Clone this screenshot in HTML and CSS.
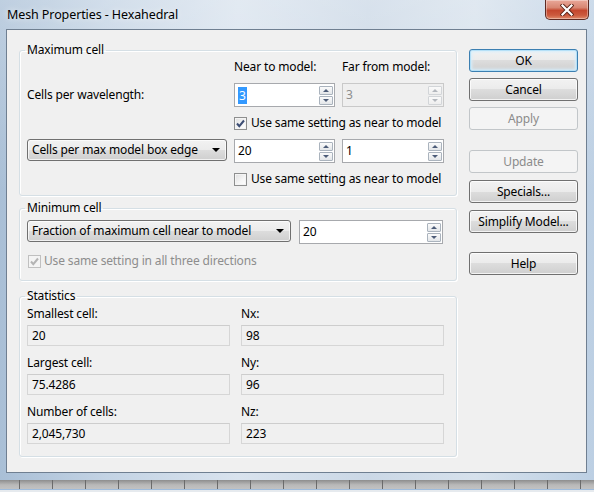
FILE: index.html
```html
<!DOCTYPE html>
<html>
<head>
<meta charset="utf-8">
<link rel="stylesheet" href="styles.css">
</head>
<body>
<div class="window">
  <div class="titlebar">
    <span class="title">Mesh Properties - Hexahedral</span>
    <div class="close">
      <svg width="14" height="12" viewBox="0 0 14 12">
        <path d="M2.5 1.5 L11.5 10.5 M11.5 1.5 L2.5 10.5" stroke="#5a2418" stroke-width="4" stroke-linecap="square"/>
        <path d="M2.5 1.5 L11.5 10.5 M11.5 1.5 L2.5 10.5" stroke="#ffffff" stroke-width="2.2" stroke-linecap="square"/>
      </svg>
    </div>
  </div>
  <div class="client">
    <div class="main">
      <fieldset class="group g-max">
        <legend>Maximum cell</legend>
        <div class="max-grid">
          <span></span>
          <span class="lbl">Near to model:</span>
          <span class="lbl">Far from model:</span>

          <span class="lbl">Cells per wavelength:</span>
          <div class="spin">
            <span class="spin-val"><span class="sel">3</span></span>
            <span class="spin-btns"><span class="sb up"></span><span class="sb down"></span></span>
          </div>
          <div class="spin disabled">
            <span class="spin-val">3</span>
            <span class="spin-btns"><span class="sb up"></span><span class="sb down"></span></span>
          </div>

          <span></span>
          <label class="check span2">
            <span class="box checked">
              <svg width="11" height="11" viewBox="0 0 11 11"><path d="M2 5.5 L4.3 8.2 L9 2.5" fill="none" stroke="#3c4d74" stroke-width="2"/></svg>
            </span>
            <span>Use same setting as near to model</span>
          </label>

          <div class="combo"><span>Cells per max model box edge</span><span class="caret"></span></div>
          <div class="spin">
            <span class="spin-val">20</span>
            <span class="spin-btns"><span class="sb up"></span><span class="sb down"></span></span>
          </div>
          <div class="spin">
            <span class="spin-val">1</span>
            <span class="spin-btns"><span class="sb up"></span><span class="sb down"></span></span>
          </div>

          <span></span>
          <label class="check span2">
            <span class="box"></span>
            <span>Use same setting as near to model</span>
          </label>
        </div>
      </fieldset>

      <fieldset class="group g-min">
        <legend>Minimum cell</legend>
        <div class="min-row">
          <div class="combo wide"><span>Fraction of maximum cell near to model</span><span class="caret"></span></div>
          <div class="spin long">
            <span class="spin-val">20</span>
            <span class="spin-btns"><span class="sb up"></span><span class="sb down"></span></span>
          </div>
        </div>
        <label class="check dis-check">
          <span class="box checked dis">
            <svg width="11" height="11" viewBox="0 0 11 11"><path d="M2 5.5 L4.3 8.2 L9 2.5" fill="none" stroke="#b4b4b4" stroke-width="2"/></svg>
          </span>
          <span>Use same setting in all three directions</span>
        </label>
      </fieldset>

      <fieldset class="group g-stats">
        <legend>Statistics</legend>
        <div class="stats-grid">
          <div class="stat"><span class="lbl">Smallest cell:</span><div class="field">20</div></div>
          <div class="stat"><span class="lbl">Nx:</span><div class="field">98</div></div>
          <div class="stat"><span class="lbl">Largest cell:</span><div class="field">75.4286</div></div>
          <div class="stat"><span class="lbl">Ny:</span><div class="field">96</div></div>
          <div class="stat"><span class="lbl">Number of cells:</span><div class="field">2,045,730</div></div>
          <div class="stat"><span class="lbl">Nz:</span><div class="field">223</div></div>
        </div>
      </fieldset>
    </div>

    <div class="buttons">
      <div class="btn-group first">
        <div class="btn default">OK</div>
        <div class="btn">Cancel</div>
        <div class="btn disabled">Apply</div>
      </div>
      <div class="btn-group second">
        <div class="btn disabled">Update</div>
        <div class="btn">Specials...</div>
        <div class="btn">Simplify Model...</div>
      </div>
      <div class="btn-group third">
        <div class="btn">Help</div>
      </div>
    </div>
  </div>
</div>
<div class="ruler"></div>
</body>
</html>
```

FILE: styles.css
```css
html, body {
  margin: 0;
  padding: 0;
}

body {
  width: 594px;
  height: 492px;
  overflow: hidden;
  font-family: "Noto Sans", "Open Sans", sans-serif;
  font-size: 12px;
  line-height: 16px;
  letter-spacing: -0.15px;
  color: #000;
  background: #b9b9b9;
}

.window {
  height: 480px;
  display: flex;
  flex-direction: column;
  background:
    linear-gradient(180deg, rgba(255,255,255,0.25) 0%, rgba(255,255,255,0) 40%),
    linear-gradient(90deg, #a9bfd6 0%, #c3d3e4 18%, #d9e3ee 40%, #cbd8e6 62%, #d6e1ec 80%, #bccfe3 100%);
}

.titlebar {
  height: 29px;
  display: flex;
  justify-content: space-between;
  align-items: flex-start;
  padding: 0 5px 0 7px;
  box-sizing: border-box;
}

.title {
  padding-top: 7px;
  font-size: 12.5px;
  line-height: 16px;
  letter-spacing: -0.1px;
  color: #000;
  text-shadow: 0 0 6px rgba(255,255,255,0.9);
}

.close {
  width: 44px;
  height: 20px;
  box-sizing: border-box;
  border: 1px solid #5d2a22;
  border-top: none;
  border-radius: 0 0 5px 5px;
  background: linear-gradient(180deg, #e9a899 0%, #d88672 40%, #c4472e 55%, #cc5a3e 80%, #e08c6c 100%);
  box-shadow: inset 0 0 0 1px rgba(255,255,255,0.35);
  display: flex;
  align-items: center;
  justify-content: center;
}

.client {
  flex: 1;
  margin: 0 7px 7px 6px;
  border: 1px solid #6f7f91;
  background: #f0f0f0;
  display: flex;
  gap: 12px;
  padding: 12px 8px 0 12px;
  box-sizing: border-box;
}

.main {
  width: 438px;
  display: flex;
  flex-direction: column;
}

.group {
  margin: 0;
  border: 1px solid #d5dfe5;
  border-radius: 3px;
  box-shadow: inset 1px 1px 0 #fff, 1px 1px 0 #fff;
  min-width: 0;
  box-sizing: border-box;
}

.group legend {
  padding: 0 2px;
  margin-left: -2px;
  line-height: 16px;
}

.g-max {
  padding: 1px 11px 8px 7px;
}

.g-min {
  margin-top: 4px;
  padding: 4px 11px 11px 7px;
}

.g-stats {
  margin-top: 7px;
  padding: 2px 11px 12px 7px;
}

.max-grid {
  display: grid;
  grid-template-columns: 200px 101px 102px;
  grid-template-rows: 16px 24px 16px 24px 16px;
  column-gap: 7px;
  row-gap: 8px;
  align-items: center;
}

.lbl {
  white-space: nowrap;
}

.span2 {
  grid-column: span 2;
}

.spin {
  height: 24px;
  box-sizing: border-box;
  border: 1px solid #a7a9ad;
  background: #fff;
  display: flex;
  align-items: center;
  justify-content: space-between;
  padding: 0 1px 0 3px;
}

.spin-val {
  display: flex;
  align-items: center;
}

.sel {
  background: #3399ff;
  color: #fff;
  padding: 0 1px;
  line-height: 17px;
}

.spin-btns {
  display: flex;
  flex-direction: column;
  gap: 1px;
}

.sb {
  width: 14px;
  height: 9px;
  box-sizing: border-box;
  border: 1px solid #aab3bd;
  border-radius: 1px;
  background: linear-gradient(180deg, #fbfbfb, #e3e6e9);
  display: flex;
  align-items: center;
  justify-content: center;
}

.sb::after {
  content: "";
  width: 0;
  height: 0;
  border-left: 3px solid transparent;
  border-right: 3px solid transparent;
}

.sb.up::after {
  border-bottom: 3px solid #4d5c78;
}

.sb.down::after {
  border-top: 3px solid #4d5c78;
}

.spin.disabled {
  background: #efefef;
  border-color: #c9c9c9;
  color: #8d8d8d;
}

.spin.disabled .sb {
  border-color: #d2d5d8;
  background: linear-gradient(180deg, #fafafa, #eeeeee);
}

.spin.disabled .sb.up::after {
  border-bottom-color: #b3b7bd;
}

.spin.disabled .sb.down::after {
  border-top-color: #b3b7bd;
}

.check {
  display: flex;
  align-items: center;
  gap: 4px;
  white-space: nowrap;
}

.box {
  width: 13px;
  height: 13px;
  box-sizing: border-box;
  border: 1px solid #8e8f8f;
  background: linear-gradient(135deg, #dedede 0%, #f6f6f6 60%, #ffffff 100%);
  box-shadow: inset 0 0 0 1px #f4f4f4;
  display: flex;
  align-items: center;
  justify-content: center;
}

.box.dis {
  border-color: #c0c0c0;
  background: #f4f4f4;
}

.combo {
  align-self: start;
  height: 22px;
  box-sizing: border-box;
  border: 1px solid #707070;
  border-radius: 3px;
  background: linear-gradient(180deg, #f2f2f2 0%, #ebebeb 50%, #dddddd 50%, #cfcfcf 100%);
  box-shadow: inset 0 0 0 1px rgba(255,255,255,0.7);
  display: flex;
  align-items: center;
  justify-content: space-between;
  padding: 0 6px 0 4px;
  white-space: nowrap;
}

.caret {
  width: 0;
  height: 0;
  border-left: 4px solid transparent;
  border-right: 4px solid transparent;
  border-top: 4px solid #000;
}

.min-row {
  display: flex;
  align-items: flex-start;
  gap: 8px;
}

.combo.wide {
  width: 264px;
}

.spin.long {
  width: 144px;
}

.dis-check {
  margin-top: 9px;
  margin-left: 1px;
  gap: 3px;
  color: #8d8d8d;
}

.stats-grid {
  display: grid;
  grid-template-columns: 203px 203px;
  column-gap: 11px;
  row-gap: 9px;
}

.stat {
  display: flex;
  flex-direction: column;
  gap: 3px;
}

.field {
  height: 21px;
  box-sizing: border-box;
  border: 1px solid #d6d6d6;
  border-top-color: #cdcdcd;
  background: #f0f0f0;
  padding: 0 4px;
  display: flex;
  align-items: center;
}

.buttons {
  width: 109px;
  margin-top: 7px;
  display: flex;
  flex-direction: column;
}

.btn-group {
  display: flex;
  flex-direction: column;
  gap: 6px;
}

.btn-group.second {
  margin-top: 20px;
  gap: 7px;
}

.btn-group.third {
  margin-top: 19px;
}

.btn {
  height: 23px;
  box-sizing: border-box;
  border: 1px solid #707070;
  border-radius: 3px;
  background: linear-gradient(180deg, #f2f2f2 0%, #ebebeb 50%, #dddddd 50%, #cfcfcf 100%);
  box-shadow: inset 0 0 0 1px rgba(255,255,255,0.75);
  display: flex;
  align-items: center;
  justify-content: center;
  white-space: nowrap;
}

.btn.default {
  border-color: #3c7fb1;
  box-shadow: inset 0 0 0 1px #b5e0f7, inset 0 0 3px 2px #d6effc;
}

.btn.disabled {
  border-color: #c2c6c9;
  background: #f4f4f4;
  box-shadow: none;
  color: #8b8b8b;
}

.ruler {
  height: 12px;
  background:
    linear-gradient(180deg, rgba(0,0,0,0) 0px, rgba(0,0,0,0) 9px, #9dbbdc 9px, #9dbbdc 10px, #e6eaee 10px),
    repeating-linear-gradient(90deg, transparent 0px, transparent 19px, #6a6a6a 19px, #6a6a6a 20px, transparent 20px, transparent 33px),
    linear-gradient(180deg, #8d8d8d 0%, #b8b8b8 40%, #c9c9c9 100%);
}
```
